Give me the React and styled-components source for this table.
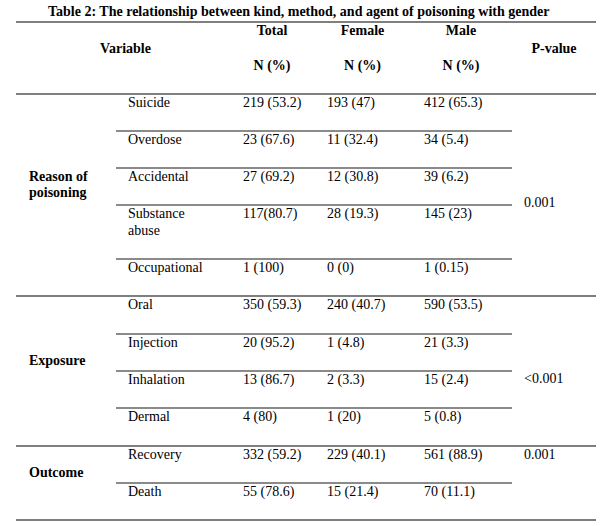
import React from "react";
import styled, { createGlobalStyle } from "styled-components";

const GlobalStyle = createGlobalStyle`
  body {
    margin: 0;
    background: #ffffff;
    font-family: "Liberation Serif", "Times New Roman", serif;
    color: #000000;
  }
`;

const LINE = "#7f7f7f";

// pFrom: row where the p-value cell starts, pSpan: how many rows it covers
const groups = [
  {
    name: ["Reason of", "poisoning"],
    pvalue: "0.001",
    pFrom: 1,
    pSpan: 4,
    rows: [
      ["Suicide", "219 (53.2)", "193 (47)", "412 (65.3)"],
      ["Overdose", "23 (67.6)", "11 (32.4)", "34 (5.4)"],
      ["Accidental", "27 (69.2)", "12 (30.8)", "39 (6.2)"],
      [["Substance", "abuse"], "117(80.7)", "28 (19.3)", "145 (23)"],
      ["Occupational", "1 (100)", "0 (0)", "1 (0.15)"],
    ],
  },
  {
    name: ["Exposure"],
    pvalue: "<0.001",
    pFrom: 1,
    pSpan: 3,
    rows: [
      ["Oral", "350 (59.3)", "240 (40.7)", "590 (53.5)"],
      ["Injection", "20 (95.2)", "1 (4.8)", "21 (3.3)"],
      ["Inhalation", "13 (86.7)", "2 (3.3)", "15 (2.4)"],
      ["Dermal", "4 (80)", "1 (20)", "5 (0.8)"],
    ],
  },
  {
    name: ["Outcome"],
    pvalue: "0.001",
    pFrom: 0,
    pSpan: 1,
    rows: [
      ["Recovery", "332 (59.2)", "229 (40.1)", "561 (88.9)"],
      ["Death", "55 (78.6)", "15 (21.4)", "70 (11.1)"],
    ],
  },
];

function PSlot({ group, index }) {
  const { pFrom, pSpan, pvalue } = group;
  if (index === pFrom) {
    return (
      <PCell rowSpan={pSpan} $rule={index === 0 ? "full" : "none"} $middle={pSpan > 1}>
        {pvalue}
      </PCell>
    );
  }
  if (index < pFrom || index >= pFrom + pSpan) {
    return <PCell $rule={index === 0 ? "full" : "none"} />;
  }
  return null;
}

export default function App() {
  return (
    <>
      <GlobalStyle />
      <Page>
        <Title>
          Table 2: The relationship between kind, method, and agent of poisoning with gender
        </Title>
        <Table>
          <colgroup>
            <col style={{ width: 100 }} />
            <col style={{ width: 119 }} />
            <col style={{ width: 74 }} />
            <col style={{ width: 107 }} />
            <col style={{ width: 96 }} />
            <col style={{ width: 84 }} />
          </colgroup>
          <thead>
            <tr>
              <HeadCell colSpan={2}>Variable</HeadCell>
              <HeadCell>
                <HeadLine>Total</HeadLine>
                <HeadLine $gap>N (%)</HeadLine>
              </HeadCell>
              <HeadCell>
                <HeadLine>Female</HeadLine>
                <HeadLine $gap>N (%)</HeadLine>
              </HeadCell>
              <HeadCell $shift={6}>
                <HeadLine>Male</HeadLine>
                <HeadLine $gap>N (%)</HeadLine>
              </HeadCell>
              <HeadCell>P-value</HeadCell>
            </tr>
          </thead>
          <tbody>
            {groups.map((group) =>
              group.rows.map((row, i) => {
                const [label, total, female, male] = row;
                const rule = i === 0 ? "full" : "inner";
                return (
                  <tr key={group.name.join() + i}>
                    {i === 0 && (
                      <GroupCell rowSpan={group.rows.length}>
                        {group.name.map((line) => (
                          <div key={line}>{line}</div>
                        ))}
                      </GroupCell>
                    )}
                    <Cell $pad={12} $rule={rule}>
                      {Array.isArray(label)
                        ? label.map((line) => <div key={line}>{line}</div>)
                        : label}
                    </Cell>
                    <Cell $pad={8} $rule={rule}>{total}</Cell>
                    <Cell $pad={18} $rule={rule}>{female}</Cell>
                    <Cell $pad={8} $rule={rule}>{male}</Cell>
                    <PSlot group={group} index={i} />
                  </tr>
                );
              })
            )}
          </tbody>
        </Table>
      </Page>
    </>
  );
}

const Page = styled.div`
  width: 580px;
  padding: 0 0 6px 16px;
`;

const Title = styled.div`
  padding: 4px 0 1px 32px;
  font-size: 14px;
  font-weight: bold;
  line-height: 16px;
  white-space: nowrap;
`;

const Table = styled.table`
  width: 580px;
  table-layout: fixed;
  border-collapse: collapse;
  border-top: 2px solid ${LINE};
  border-bottom: 2px solid ${LINE};
  font-size: 14px;
  line-height: 16.3px;
`;

const HeadCell = styled.th`
  padding: 0 ${(p) => p.$shift || 0}px 18px 0;
  text-align: center;
  vertical-align: middle;
  font-weight: bold;
  border-bottom: 2px solid ${LINE};
`;

const HeadLine = styled.div`
  margin-top: ${(p) => (p.$gap ? "19px" : "0")};
`;

const GroupCell = styled.td`
  padding: 0 0 19px 13px;
  vertical-align: middle;
  font-weight: bold;
  border-top: 2px solid ${LINE};
`;

const Cell = styled.td`
  padding: 0 0 19px ${(p) => p.$pad}px;
  vertical-align: top;
  white-space: nowrap;
  border-top: ${(p) =>
    p.$rule === "full"
      ? `2px solid ${LINE}`
      : p.$rule === "inner"
      ? `2px solid #8a8a8a`
      : "none"};
`;

const PCell = styled.td`
  padding: 0 0 19px 12px;
  vertical-align: ${(p) => (p.$middle ? "middle" : "top")};
  border-top: ${(p) => (p.$rule === "full" ? `2px solid ${LINE}` : "none")};
`;
